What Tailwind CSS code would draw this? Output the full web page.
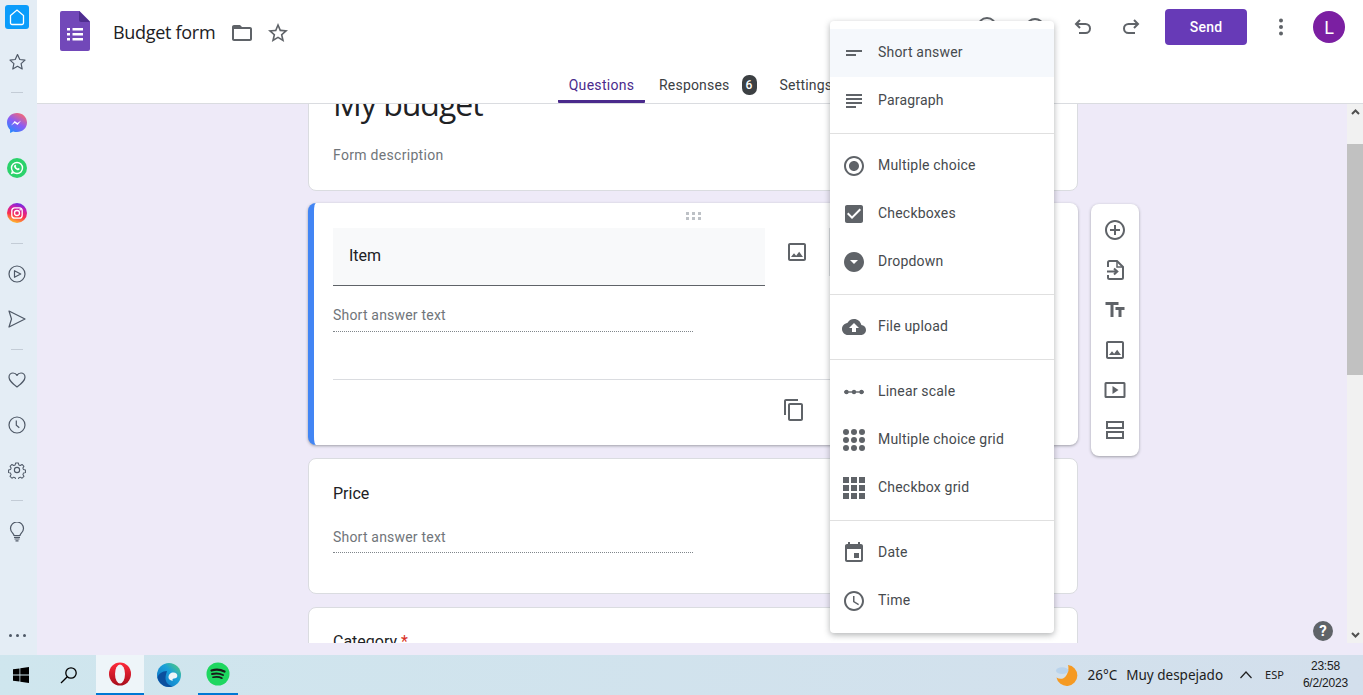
<!DOCTYPE html>
<html>

<head>
    <meta charset="UTF-8">
    <title>Budget form</title>
    <script src="https://cdn.jsdelivr.net/npm/@tailwindcss/browser@4"></script>
</head>

<body class="w-[1363px] h-[695px] overflow-hidden font-['Roboto',sans-serif] bg-[#eeeaf8]">
    <div class="flex h-[655px]">
        <!-- opera sidebar -->
        <div class="w-[37px] h-full bg-[#e4edf5] flex flex-col items-center pt-[5px] pr-[3px] pb-[18px] shrink-0">
            <div class="w-6 h-6 rounded-[3px] bg-[#0a9cfb] flex items-center justify-center">
                <svg width="16" height="17" viewBox="0 0 16 17" fill="none" stroke="#fff" stroke-width="1.3"><path d="M1.5 6.5 8 1l6.500 5.500V14a1.500 1.500 0 0 1-1.500 1.500H3A1.500 1.500 0 0 1 1.500 14z" /></svg>
            </div>
            <div class="h-[45px] mt-[10px] flex items-center justify-center">
                <svg width="19" height="18" viewBox="0 0 18 18" fill="none" stroke="#4e5866" stroke-width="1.200" stroke-linejoin="round"><path d="M9 1.500l2.300 5 5.200.6-3.900 3.500 1.100 5.400L9 13.300 4.300 16l1.100-5.400L1.500 7.100l5.200-.6z" /></svg>
            </div>
            <div class="w-3 h-px bg-[#c3ccd6] mt-2"></div>
            <div class="h-[45px] mt-[7px] flex items-center justify-center">
                <svg width="20" height="20" viewBox="0 0 20 20"><defs><linearGradient id="ms" x1="0.2" y1="1" x2="0.8" y2="0"><stop offset="0" stop-color="#1e8cff" /><stop offset="0.5" stop-color="#8a5cf6" /><stop offset="1" stop-color="#ff6a68" /></linearGradient></defs><path fill="url(#ms)" d="M10 0C4.400 0 0 4.100 0 9.600c0 2.900 1.200 5.400 3.100 7.100V20l3-1.600c1.200.4 2.500.7 3.900.7 5.600 0 10-4.100 10-9.500S15.600 0 10 0z" /><path fill="#fff" d="M4 12.500l3.700-4.600 2.700 2 3.800-2.300-3.700 4.500-2.700-2z" /></svg>
            </div>
            <div class="h-[45px] flex items-center justify-center">
                <svg width="20" height="20" viewBox="0 0 20 20"><circle cx="10" cy="10" r="10" fill="#2bd26b" /><circle cx="10" cy="10" r="5.500" fill="none" stroke="#fff" stroke-width="1.400" /><path fill="#fff" d="M7.800 7c.5-.4.900-.3 1.100.2l.4.900-.5.7c.4.800 1 1.400 1.900 1.800l.7-.6 1 .5c.4.200.4.600.1 1-.6.700-1.500.8-2.500.4-1.400-.6-2.300-1.500-2.800-2.800-.3-.8-.2-1.500.6-2.100z" /><path fill="#fff" d="M3.800 16.300l1-3.200 2.200 2.200z" /></svg>
            </div>
            <div class="h-[45px] flex items-center justify-center">
                <svg width="20" height="20" viewBox="0 0 20 20"><defs><linearGradient id="ig" x1="0.3" y1="1" x2="0.6" y2="0"><stop offset="0" stop-color="#ffc828" /><stop offset="0.4" stop-color="#fb2d4f" /><stop offset="0.75" stop-color="#c81fb0" /><stop offset="1" stop-color="#6a2ee6" /></linearGradient></defs><circle cx="10" cy="10" r="10" fill="url(#ig)" /><rect x="4.800" y="4.800" width="10.400" height="10.400" rx="3" fill="none" stroke="#fff" stroke-width="1.300" /><circle cx="10" cy="10" r="2.500" fill="none" stroke="#fff" stroke-width="1.300" /><circle cx="13.200" cy="6.800" r=".8" fill="#fff" /></svg>
            </div>
            <div class="w-3 h-px bg-[#c3ccd6] mt-2"></div>
            <div class="h-[45px] mt-[7px] flex items-center justify-center">
                <svg width="18" height="18" viewBox="0 0 18 18" fill="none" stroke="#4e5866" stroke-width="1.200" stroke-linejoin="round"><circle cx="9" cy="9" r="8" /><path d="M6.500 5.700 12.700 9l-6.200 3.300z" /></svg>
            </div>
            <div class="h-[45px] flex items-center justify-center">
                <svg width="18" height="18" viewBox="0 0 18 18" fill="none" stroke="#4e5866" stroke-width="1.200" stroke-linejoin="round"><path d="M1 1l16 8-16 8 2.500-8z" /></svg>
            </div>
            <div class="w-3 h-px bg-[#c3ccd6] mt-2"></div>
            <div class="h-[45px] mt-[7px] flex items-center justify-center">
                <svg width="18" height="16" viewBox="0 0 18 16" fill="none" stroke="#4e5866" stroke-width="1.200" stroke-linejoin="round"><path d="M9 15C4 11 1 8.500 1 5.200 1 2.800 2.800 1 5 1c1.700 0 3.200.9 4 2.400C9.800 1.900 11.300 1 13 1c2.200 0 4 1.800 4 4.200C17 8.500 14 11 9 15z" /></svg>
            </div>
            <div class="h-[45px] flex items-center justify-center">
                <svg width="18" height="18" viewBox="0 0 18 18" fill="none" stroke="#4e5866" stroke-width="1.200"><circle cx="9" cy="9" r="8" /><path d="M8.300 4.500v4.700l3 2.500" /></svg>
            </div>
            <div class="h-[45px] flex items-center justify-center">
                <svg width="18" height="18" viewBox="0 0 24 24" fill="none" stroke="#4e5866" stroke-width="1.500" stroke-linejoin="round"><circle cx="12" cy="12" r="3.500" /><path d="M10 1.500h4l.7 3 2.200.9 2.600-1.600 2.800 2.800-1.600 2.600.9 2.200 2.900.7v3.800l-2.900.7-.9 2.200 1.600 2.600-2.800 2.800-2.600-1.600-2.200.9-.7 2.900h-4l-.7-2.900-2.200-.9-2.600 1.600-2.800-2.800 1.600-2.600-.9-2.200-2.900-.7v-3.800l2.900-.7.9-2.200-1.600-2.600 2.800-2.800 2.600 1.600 2.200-.9z" transform="translate(1.200 1.200) scale(.9)" /></svg>
            </div>
            <div class="w-3 h-px bg-[#c3ccd6] mt-2"></div>
            <div class="h-[45px] mt-2 flex items-center justify-center">
                <svg width="16" height="20" viewBox="0 0 16 20" fill="none" stroke="#4e5866" stroke-width="1.200"><path d="M5 13.500c0-2-3.500-3.200-3.500-7A6.500 6.500 0 0 1 14.500 6.500c0 3.800-3.500 5-3.500 7z" /><path d="M5 15.300h6M5.500 17h5M6.500 18.800h3" /></svg>
            </div>
            <div class="mt-auto flex gap-[4px]">
                <span class="w-[3px] h-[3px] rounded-full bg-[#4e5866]"></span>
                <span class="w-[3px] h-[3px] rounded-full bg-[#4e5866]"></span>
                <span class="w-[3px] h-[3px] rounded-full bg-[#4e5866]"></span>
            </div>
        </div>

        <div class="relative flex-1 min-w-0">
            <!-- header -->
            <div class="h-[104px] bg-white border-b border-[#dadce0] relative z-10">
                <div class="h-[64px] flex items-center pl-[23px]">
                    <svg class="mb-[2px]" width="30" height="40" viewBox="0 0 30 40"><path fill="#7248b9" d="M2 0h17.500L30 10.500V38a2 2 0 0 1-2 2H2a2 2 0 0 1-2-2V2a2 2 0 0 1 2-2z" /><path fill="#4f2e8f" d="M19 0l11 11H21a2 2 0 0 1-2-2z" /><path fill="#fff" d="M7 17h3v2.400H7zm5.500 0H23v2.400H12.500zM7 22h3v2.400H7zm5.500 0H23v2.400H12.500zM7 27h3v2.400H7zm5.500 0H23v2.400H12.500z" /></svg>
                    <span class="ml-[23px] text-[18px] text-[#202124] font-['Open_Sans',sans-serif] tracking-[-0.3px]">Budget form</span>
                    <svg class="ml-[15px] mt-[2px]" width="24" height="24" viewBox="0 0 24 24" fill="#5f6368"><path d="M20 6h-8l-2-2H4c-1.100 0-2 .9-2 2v12c0 1.100.9 2 2 2h16c1.100 0 2-.9 2-2V8c0-1.100-.9-2-2-2zm0 12H4V8h16v10z" /></svg>
                    <svg class="ml-[12px] mt-[2px]" width="24" height="24" viewBox="0 0 24 24" fill="#5f6368"><path d="M22 9.240l-7.190-.62L12 2 9.190 8.630 2 9.240l5.460 4.730L5.820 21 12 17.270 18.180 21l-1.630-7.030L22 9.240zM12 15.400l-3.760 2.270 1-4.280-3.320-2.880 4.380-.38L12 6.100l1.710 4.040 4.380.38-3.320 2.880 1 4.280L12 15.400z" /></svg>
                    <div class="ml-auto mb-[10px] flex items-center pr-[18px]">
                        <svg width="24" height="24" viewBox="0 0 24 24" fill="none" stroke="#5f6368" stroke-width="2"><circle cx="12" cy="12" r="9" /></svg>
                        <svg class="ml-6" width="24" height="24" viewBox="0 0 24 24" fill="none" stroke="#5f6368" stroke-width="2"><path d="M2 12c2.500-5.500 6-8 10-8s7.500 2.500 10 8c-2.500 5.500-6 8-10 8s-7.500-2.500-10-8z" /></svg>
                        <svg class="ml-6" width="24" height="24" viewBox="0 0 24 24" fill="none" stroke="#5f6368" stroke-width="2"><path d="M9 5 5 9l4 4M5 9h9.500a4.500 4.500 0 0 1 0 9H8" /></svg>
                        <svg class="ml-6" width="24" height="24" viewBox="0 0 24 24" fill="none" stroke="#5f6368" stroke-width="2"><path d="M15 5l4 4-4 4M19 9H9.500a4.500 4.500 0 0 0 0 9H16" /></svg>
                        <button class="ml-[22px] w-[82px] h-9 rounded-[4px] bg-[#673ab7] text-white text-[14px] font-medium tracking-[.2px]">Send</button>
                        <svg class="ml-[22px]" width="24" height="24" viewBox="0 0 24 24" fill="#5f6368"><circle cx="12" cy="5.500" r="2" /><circle cx="12" cy="12" r="2" /><circle cx="12" cy="18.500" r="2" /></svg>
                        <div class="ml-5 w-8 h-8 rounded-full bg-[#7b1fa2] text-white text-[18px] flex items-center justify-center">L</div>
                    </div>
                </div>
                <div class="h-[39px] flex pl-[521px] text-[14px] text-[#3c4043] tracking-[.2px]">
                    <div class="w-[87px] h-full border-b-[3px] border-[#4a2a8c] rounded-b-[1px] flex justify-center pt-[11px] text-[#4a2a8c] tracking-[.3px]">Questions</div>
                    <div class="ml-[14px] pt-[11px]">Responses</div>
                    <div class="ml-3 mt-[11px] w-[15px] h-[20px] rounded-[7px] bg-[#3c4043] text-white text-[12px] font-medium flex items-center justify-center">6</div>
                    <div class="ml-[23px] pt-[11px]">Settings</div>
                </div>
            </div>

            <!-- form scroller -->
            <div class="h-[539px] overflow-hidden relative flex">
                <div class="ml-[271px] w-[770px] flex flex-col gap-3 shrink-0">
                    <div class="h-[127px] mt-[-40px] shrink-0 bg-white rounded-lg border border-[#dadce0] px-6 relative">
                        <p class="mt-[19px] text-[32px] leading-[40px] text-[#202124] font-['Open_Sans',sans-serif] tracking-[-1px]">My budget</p>
                        <p class="mt-[21px] text-[14px] text-[#70757a] tracking-[.3px]">Form description</p>
                    </div>
                    <div class="h-[242px] shrink-0 bg-white rounded-lg shadow-[0_1px_3px_rgba(60,64,67,.45)] border-l-[6px] border-[#4285f4] pl-[19px] relative">
                        <div class="flex justify-center w-[722px] pt-[9px] h-[25px]">
                            <svg width="16" height="8" viewBox="0 0 16 8" fill="#bdc1c6"><rect width="3" height="3" /><rect x="6" width="3" height="3" /><rect x="12" width="3" height="3" /><rect y="5" width="3" height="3" /><rect x="6" y="5" width="3" height="3" /><rect x="12" y="5" width="3" height="3" /></svg>
                        </div>
                        <div class="flex">
                            <div class="w-[432px] h-[58px] bg-[#f8f9fa] border-b border-[#5f6368] pl-4 pb-[2px] flex items-center text-[16px] text-[#202124]">Item</div>
                            <svg class="ml-5 mt-3" width="24" height="24" viewBox="0 0 24 24" fill="#5f6368"><path d="M19 5v14H5V5h14m0-2H5c-1.100 0-2 .9-2 2v14c0 1.100.9 2 2 2h14c1.100 0 2-.9 2-2V5c0-1.100-.9-2-2-2zm-4.860 8.860l-3 3.870L9 13.140 6 17h12l-3.860-5.140z" /></svg>
                            <div class="ml-[20px] w-px h-[48px] bg-[#dadce0]"></div>
                        </div>
                        <div class="w-[360px] mt-[19px] pb-[5px] border-b border-dotted border-[#80868b] text-[14px] text-[#70757a] tracking-[.2px]">Short answer text</div>
                        <div class="h-px bg-[#dadce0] mt-[47px] mr-6"></div>
                        <svg class="ml-[449px] mt-[18px]" width="24" height="24" viewBox="0 0 24 24" fill="#5f6368"><path d="M16 1H4c-1.100 0-2 .9-2 2v14h2V3h12V1zm3 4H8c-1.100 0-2 .9-2 2v14c0 1.100.9 2 2 2h11c1.100 0 2-.9 2-2V7c0-1.100-.9-2-2-2zm0 16H8V7h11v14z" /></svg>
                    </div>
                    <div class="h-[136px] mt-px shrink-0 bg-white rounded-lg border border-[#dadce0] px-6 pt-[25px]">
                        <p class="text-[16px] leading-5 text-[#202124]">Price</p>
                        <div class="w-[360px] mt-[23px] pb-[4px] border-b border-dotted border-[#80868b] text-[14px] text-[#70757a] tracking-[.2px]">Short answer text</div>
                    </div>
                    <div class="h-[120px] mt-px shrink-0 bg-white rounded-lg border border-[#dadce0] px-6 pt-6">
                        <p class="text-[16px] leading-5 text-[#202124]">Category <span class="text-[#d93025]">*</span></p>
                    </div>
                </div>

                <!-- floating toolbar -->
                <div class="absolute left-[1054px] top-[100px] w-[48px] h-[252px] bg-white rounded-lg shadow-[0_1px_3px_rgba(60,64,67,.45)] flex flex-col items-center pt-[14px] gap-4">
                    <svg width="24" height="24" viewBox="0 0 24 24" fill="#5f6368"><path d="M13 7h-2v4H7v2h4v4h2v-4h4v-2h-4V7zm-1-5C6.480 2 2 6.480 2 12s4.480 10 10 10 10-4.480 10-10S17.520 2 12 2zm0 18c-4.410 0-8-3.590-8-8s3.590-8 8-8 8 3.590 8 8-3.590 8-8 8z" /></svg>
                    <svg width="24" height="24" viewBox="0 0 24 24" fill="none" stroke="#5f6368" stroke-width="2"><path d="M5 9V4.500A1.500 1.500 0 0 1 6.500 3H14l6 6v10.500a1.500 1.500 0 0 1-1.500 1.500h-12A1.500 1.500 0 0 1 5 19.500V17" /><path d="M14 3v6h6" stroke-width="1.500" /><path d="M4 13.500h10M11 10.500l3.300 3-3.300 3" /></svg>
                    <svg width="24" height="24" viewBox="0 0 24 24" fill="#5f6368"><path d="M2.500 4v3h5v12h3V7h5V4h-13zm19 5h-9v3h3v7h3v-7h3V9z" /></svg>
                    <svg width="24" height="24" viewBox="0 0 24 24" fill="#5f6368"><path d="M19 5v14H5V5h14m0-2H5c-1.100 0-2 .9-2 2v14c0 1.100.9 2 2 2h14c1.100 0 2-.9 2-2V5c0-1.100-.9-2-2-2zm-4.860 8.860l-3 3.870L9 13.140 6 17h12l-3.860-5.140z" /></svg>
                    <svg width="24" height="24" viewBox="0 0 24 24" fill="#5f6368"><path d="M21 4H3a1.500 1.500 0 0 0-1.500 1.500v13A1.500 1.500 0 0 0 3 20h18a1.500 1.500 0 0 0 1.500-1.500v-13A1.500 1.500 0 0 0 21 4zm-.5 14h-17V6h17zM9.500 8v8l6-4z" /></svg>
                    <svg width="24" height="24" viewBox="0 0 24 24" fill="none" stroke="#5f6368" stroke-width="2"><rect x="4" y="4" width="16" height="6" /><rect x="4" y="14" width="16" height="6" /></svg>
                </div>

                <!-- help -->
                <div class="absolute left-[1276px] top-[517px] w-5 h-5 rounded-full bg-[#5f6368] text-white text-[15px] font-bold flex items-center justify-center">?</div>

                <!-- scrollbar -->
                <div class="absolute right-0 top-0 w-4 h-full bg-[#f1f1f1] flex flex-col items-center">
                    <svg class="mt-[5px]" width="9" height="6" viewBox="0 0 9 6" fill="none" stroke="#505050" stroke-width="2"><path d="M1 5l3.500-3.500L8 5" /></svg>
                    <div class="w-4 h-[231px] mt-[29px] bg-[#c1c1c1]"></div>
                    <svg class="mt-auto mb-[5px]" width="9" height="6" viewBox="0 0 9 6" fill="none" stroke="#505050" stroke-width="2"><path d="M1 1l3.500 3.500L8 1" /></svg>
                </div>
            </div>

            <!-- question type menu -->
            <div class="absolute left-[793px] top-[21px] z-20 w-[224px] bg-white rounded-[4px] shadow-[0_2px_6px_rgba(60,64,67,.4)] text-[14px] text-[#464a4e] tracking-[.2px]">
                <div class="pt-2 pb-2 border-b border-[#e0e0e0]">
                    <div class="h-12 flex items-center gap-[12px] px-3 bg-[#f5f8fc]">
                        <svg width="24" height="24" viewBox="0 0 24 24" fill="#5f6368"><path d="M4 9h16v2H4zm0 4h10v2H4z" /></svg>
                        <span class="pb-[2px]">Short answer</span>
                    </div>
                    <div class="h-12 flex items-center gap-[12px] px-3">
                        <svg width="24" height="24" viewBox="0 0 24 24" fill="#5f6368"><path d="M14 17H4v2h10v-2zm6-8H4v2h16V9zM4 15h16v-2H4v2zM4 5v2h16V5H4z" /></svg>
                        <span class="pb-[2px]">Paragraph</span>
                    </div>
                </div>
                <div class="py-2 border-b border-[#e0e0e0]">
                    <div class="h-12 flex items-center gap-[12px] px-3">
                        <svg width="24" height="24" viewBox="0 0 24 24" fill="#5f6368"><path d="M12 7c-2.760 0-5 2.240-5 5s2.240 5 5 5 5-2.240 5-5-2.240-5-5-5zm0-5C6.480 2 2 6.480 2 12s4.480 10 10 10 10-4.480 10-10S17.520 2 12 2zm0 18c-4.420 0-8-3.580-8-8s3.580-8 8-8 8 3.580 8 8-3.580 8-8 8z" /></svg>
                        <span class="pb-[2px]">Multiple choice</span>
                    </div>
                    <div class="h-12 flex items-center gap-[12px] px-3">
                        <svg width="24" height="24" viewBox="0 0 24 24" fill="#5f6368"><path d="M19 3H5c-1.110 0-2 .9-2 2v14c0 1.100.89 2 2 2h14c1.110 0 2-.9 2-2V5c0-1.100-.89-2-2-2zm-9 14l-5-5 1.410-1.410L10 14.170l7.590-7.590L19 8l-9 9z" /></svg>
                        <span class="pb-[2px]">Checkboxes</span>
                    </div>
                    <div class="h-12 flex items-center gap-[12px] px-3">
                        <svg width="24" height="24" viewBox="0 0 24 24" fill="#5f6368"><path d="M12 2C6.480 2 2 6.480 2 12s4.480 10 10 10 10-4.480 10-10S17.520 2 12 2zm0 12l-4-4h8l-4 4z" /></svg>
                        <span class="pb-[2px]">Dropdown</span>
                    </div>
                </div>
                <div class="py-2 border-b border-[#e0e0e0]">
                    <div class="h-12 flex items-center gap-[12px] px-3">
                        <svg width="24" height="24" viewBox="0 0 24 24" fill="#5f6368"><path d="M19.350 10.040C18.670 6.590 15.640 4 12 4 9.110 4 6.600 5.640 5.350 8.040 2.340 8.360 0 10.910 0 14c0 3.310 2.690 6 6 6h13c2.760 0 5-2.240 5-5 0-2.640-2.050-4.780-4.650-4.960zM14 13v4h-4v-4H7l5-5 5 5h-3z" /></svg>
                        <span class="pb-[2px]">File upload</span>
                    </div>
                </div>
                <div class="py-2 border-b border-[#e0e0e0]">
                    <div class="h-12 flex items-center gap-[12px] px-3">
                        <svg width="24" height="24" viewBox="0 0 24 24" fill="#5f6368"><path d="M2 11.300h20v1.400H2z" /><circle cx="4.500" cy="12" r="2.200" /><circle cx="12" cy="12" r="2.200" /><circle cx="19.500" cy="12" r="2.200" /></svg>
                        <span class="pb-[2px]">Linear scale</span>
                    </div>
                    <div class="h-12 flex items-center gap-[12px] px-3">
                        <svg width="24" height="24" viewBox="0 0 24 24" fill="#5f6368"><circle cx="4" cy="4" r="3" /><circle cx="12" cy="4" r="3" /><circle cx="20" cy="4" r="3" /><circle cx="4" cy="12" r="3" /><circle cx="12" cy="12" r="3" /><circle cx="20" cy="12" r="3" /><circle cx="4" cy="20" r="3" /><circle cx="12" cy="20" r="3" /><circle cx="20" cy="20" r="3" /></svg>
                        <span class="pb-[2px]">Multiple choice grid</span>
                    </div>
                    <div class="h-12 flex items-center gap-[12px] px-3">
                        <svg width="24" height="24" viewBox="0 0 24 24" fill="#5f6368"><path d="M1 1h6v6H1zm8 0h6v6H9zm8 0h6v6h-6zM1 9h6v6H1zm8 0h6v6H9zm8 0h6v6h-6zM1 17h6v6H1zm8 0h6v6H9zm8 0h6v6h-6z" /></svg>
                        <span class="pb-[2px]">Checkbox grid</span>
                    </div>
                </div>
                <div class="py-2">
                    <div class="h-12 flex items-center gap-[12px] px-3">
                        <svg width="24" height="24" viewBox="0 0 24 24" fill="#5f6368"><path d="M17 12h-5v5h5v-5zM16 1v2H8V1H6v2H5c-1.110 0-1.990.9-1.990 2L3 19c0 1.100.89 2 2 2h14c1.100 0 2-.9 2-2V5c0-1.100-.9-2-2-2h-1V1h-2zm3 18H5V8h14v11z" /></svg>
                        <span class="pb-[2px]">Date</span>
                    </div>
                    <div class="h-12 flex items-center gap-[12px] px-3">
                        <svg width="24" height="24" viewBox="0 0 24 24" fill="#5f6368"><path d="M11.990 2C6.470 2 2 6.480 2 12s4.470 10 9.990 10C17.520 22 22 17.520 22 12S17.520 2 11.990 2zM12 20c-4.420 0-8-3.580-8-8s3.580-8 8-8 8 3.580 8 8-3.580 8-8 8z" /><path d="M12.500 7H11v6l5.250 3.150.75-1.230-4.500-2.670z" /></svg>
                        <span class="pb-[2px]">Time</span>
                    </div>
                </div>
            </div>
        </div>
    </div>

    <!-- windows taskbar -->
    <div class="h-10 flex items-center bg-gradient-to-r from-[#cfe6ee] to-[#d3dfec] font-['Noto_Sans',sans-serif] text-[#202020]">
        <svg class="ml-[13px]" width="16" height="16" viewBox="0 0 16 16" fill="#000"><path d="M0 2.300 6.500 1.400V7.600H0zM7.300 1.300 16 0v7.600H7.300zM0 8.400H6.500v6.200L0 13.700zM7.300 8.400H16V16L7.300 14.700z" /></svg>
        <svg class="ml-[31px]" width="18" height="18" viewBox="0 0 18 18" fill="none" stroke="#000" stroke-width="1.300"><circle cx="11" cy="7" r="5.200" /><path d="M7.300 10.700 1 17" /></svg>
        <div class="ml-[18px] w-12 h-full bg-[#eef5f9] border-b-2 border-[#0078d4] flex items-center justify-center">
            <svg width="24" height="24" viewBox="0 0 24 24"><defs><linearGradient id="op" x1="0" y1="0" x2="0" y2="1"><stop offset="0" stop-color="#ff2a3a" /><stop offset="1" stop-color="#a80d1c" /></linearGradient></defs><ellipse cx="12" cy="12" rx="11" ry="11.500" fill="url(#op)" /><ellipse cx="12" cy="12" rx="5" ry="9.500" fill="#eef5f9" /></svg>
        </div>
        <svg class="ml-[13px]" width="24" height="24" viewBox="0 0 24 24"><defs><linearGradient id="ed" x1="0" y1="1" x2="1" y2="0"><stop offset="0" stop-color="#0f6cc4" /><stop offset="0.6" stop-color="#1aa0d8" /><stop offset="1" stop-color="#5fd36a" /></linearGradient></defs><circle cx="12" cy="12" r="12" fill="url(#ed)" /><path fill="#0b4f9e" d="M10 8C5 8 1.500 11 .4 14.500 1.800 20 6.500 24 12 24c1.500 0 3-.3 4-.8-4-.5-7.500-3.500-7.500-8C8.500 12.500 9.500 10 10 8z" /><path fill="#eef5f9" d="M11.500 14.500c0-3 2-5 5-5 2.500 0 3.800 1.500 3.800 3.300 0 1.700-1.300 2.700-3.300 2.700-1.500 0-2 1-1 2.300-2.500-.3-4.500-1.300-4.500-3.300z" /></svg>
        <div class="ml-[17px] w-10 h-full border-b-2 border-[#0078d4] flex items-center justify-center">
            <svg width="24" height="24" viewBox="0 0 24 24" fill="none" stroke="#1a1a1a" stroke-linecap="round"><circle cx="12" cy="12" r="11.500" fill="#1ed760" stroke="none" /><path stroke-width="2.200" d="M5.500 8.500c4.500-1.300 9-1 13 1" /><path stroke-width="1.900" d="M6 12c4-1 7.500-.8 11 1" /><path stroke-width="1.600" d="M7 15.300c3.300-.8 6.200-.6 9 .9" /></svg>
        </div>
        <svg class="ml-auto" width="24" height="23" viewBox="0 0 24 24"><path fill="#f59a23" d="M13 1a11 11 0 1 1-12 13c3 2 6.500 2 9-.5S14.500 5 13 1z" /><ellipse cx="7" cy="7" rx="6.500" ry="3.500" fill="#b9d3ec" /></svg>
        <span class="ml-[8px] text-[13.500px]">26°C</span>
        <span class="ml-[9px] text-[13.500px]">Muy despejado</span>
        <svg class="ml-[17px]" width="12" height="8" viewBox="0 0 12 8" fill="none" stroke="#202020" stroke-width="1.200"><path d="M.5 7l5.500-6 5.500 6" /></svg>
        <span class="ml-[13px] text-[11px]">ESP</span>
        <div class="ml-[19px] mr-[15px] text-[12px] leading-[17px] text-center font-['Liberation_Sans',sans-serif] tracking-[-0.2px]">
            <p>23:58</p>
            <p>6/2/2023</p>
        </div>
    </div>
</body>

</html>
